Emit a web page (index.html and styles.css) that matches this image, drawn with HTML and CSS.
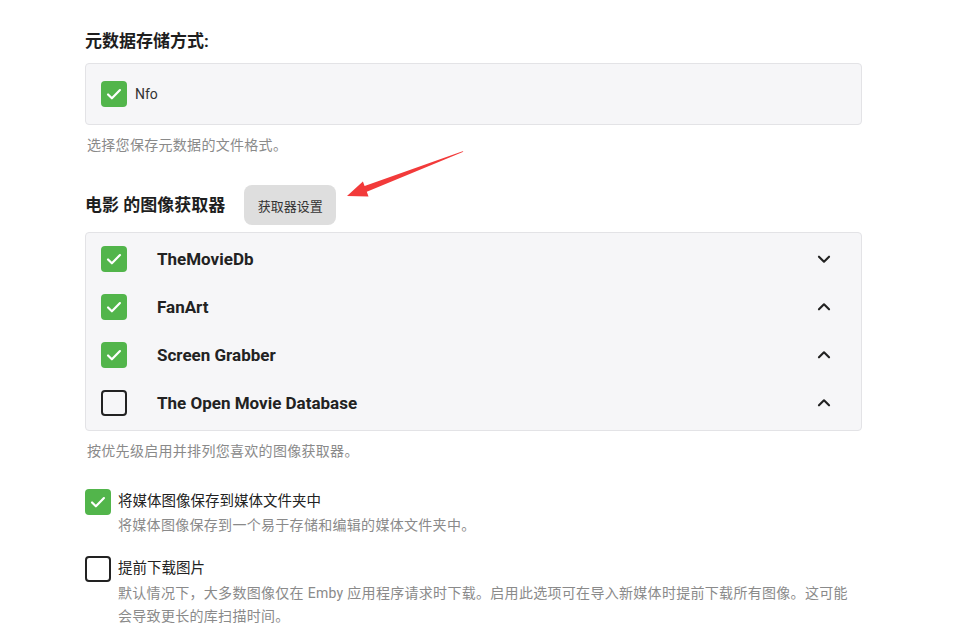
FILE: index.html
```html
<!DOCTYPE html>
<html lang="zh-CN">
  <head>
    <meta charset="UTF-8" />
    <title>图像获取器</title>
    <link rel="stylesheet" href="styles.css">
  </head>
  <body>
    <div class="page">

      <h2 class="section-title">元数据存储方式:</h2>
      <div class="list-box single">
        <div class="check-row">
          <span class="chk on"><svg viewBox="0 0 24 24"><path d="M5.5 12.5l4.2 4.2 8.8-9"/></svg></span>
          <span class="chk-text">Nfo</span>
        </div>
      </div>
      <div class="field-help">选择您保存元数据的文件格式。</div>

      <div class="section-head">
        <h2 class="section-title">电影 的图像获取器</h2>
        <button class="btn-gray">获取器设置</button>
      </div>
      <div class="list-box fetchers">
        <div class="fetcher">
          <span class="chk on"><svg viewBox="0 0 24 24"><path d="M5.5 12.5l4.2 4.2 8.8-9"/></svg></span>
          <span class="fetcher-name">TheMovieDb</span>
          <svg class="chev" viewBox="0 0 24 24"><path d="M6.5 9.5l5.5 5.5 5.5-5.5"/></svg>
        </div>
        <div class="fetcher">
          <span class="chk on"><svg viewBox="0 0 24 24"><path d="M5.5 12.5l4.2 4.2 8.8-9"/></svg></span>
          <span class="fetcher-name">FanArt</span>
          <svg class="chev" viewBox="0 0 24 24"><path d="M6.5 14.5l5.5-5.5 5.5 5.5"/></svg>
        </div>
        <div class="fetcher">
          <span class="chk on"><svg viewBox="0 0 24 24"><path d="M5.5 12.5l4.2 4.2 8.8-9"/></svg></span>
          <span class="fetcher-name">Screen Grabber</span>
          <svg class="chev" viewBox="0 0 24 24"><path d="M6.5 14.5l5.5-5.5 5.5 5.5"/></svg>
        </div>
        <div class="fetcher">
          <span class="chk"></span>
          <span class="fetcher-name">The Open Movie Database</span>
          <svg class="chev" viewBox="0 0 24 24"><path d="M6.5 14.5l5.5-5.5 5.5 5.5"/></svg>
        </div>
      </div>
      <div class="field-help">按优先级启用并排列您喜欢的图像获取器。</div>

      <div class="option first">
        <span class="chk on"><svg viewBox="0 0 24 24"><path d="M5.5 12.5l4.2 4.2 8.8-9"/></svg></span>
        <div class="option-body">
          <div class="option-label">将媒体图像保存到媒体文件夹中</div>
          <div class="option-desc">将媒体图像保存到一个易于存储和编辑的媒体文件夹中。</div>
        </div>
      </div>

      <div class="option">
        <span class="chk"></span>
        <div class="option-body">
          <div class="option-label">提前下载图片</div>
          <div class="option-desc long">默认情况下，大多数图像仅在 Emby 应用程序请求时下载。启用此选项可在导入新媒体时提前下载所有图像。这可能会导致更长的库扫描时间。</div>
        </div>
      </div>

      <!-- 标注箭头 -->
      <svg class="arrow" viewBox="0 0 130 60" width="130" height="60">
        <polygon points="4,50 25.5,50.4 23.8,45.7 120.4,5.8 119.6,5.2 21.6,40.1 19.9,35.4" fill="#f23a3a"/>
      </svg>
    </div>
  </body>
</html>
```

FILE: styles.css
```css
body{
  margin: 0;
  background: #FFFFFF;
  font-family: Roboto, "Noto Sans CJK SC", sans-serif;
  color: #222222;
}

.page{
  position: relative;
  width: 777px;
  margin-left: 85px;
  padding-top: 29px;
}

.section-title{
  margin: 0;
  font-size: 17px;
  line-height: 24px;
  font-weight: 700;
  color: #1e1e1e;
}

.list-box{
  margin-top: 10px;
  border: 1px solid #E3E3E6;
  border-radius: 4px;
  background: #F6F6F8;
}

.list-box.single{
  padding: 17px 15px;
}

.check-row{
  display: flex;
  align-items: center;
}

.chk{
  flex: none;
  width: 26px;
  height: 26px;
  box-sizing: border-box;
  border: 2px solid #222222;
  border-radius: 4px;
  display: flex;
  align-items: center;
  justify-content: center;
}

.chk.on{
  border: none;
  background: #52B54B;
}

.chk svg{
  width: 22px;
  height: 22px;
  fill: none;
  stroke: #FFFFFF;
  stroke-width: 2.4;
  stroke-linecap: round;
  stroke-linejoin: round;
}

.chk-text{
  margin-left: 8px;
  font-size: 14px;
  color: #333333;
}

.field-help{
  margin-top: 10px;
  padding-left: 2px;
  font-size: 14px;
  line-height: 20px;
  color: #8a8a8a;
  letter-spacing: 0.3px;
}

.section-head{
  margin-top: 30px;
  display: flex;
  align-items: center;
}

.btn-gray{
  margin-left: 19px;
  width: 92px;
  height: 40px;
  border: none;
  border-radius: 8px;
  background: #DEDEDE;
  font-family: inherit;
  font-size: 13px;
  color: #333333;
}

.list-box.fetchers{
  margin-top: 7px;
  padding: 2px 0 3px;
}

.fetcher{
  height: 48px;
  display: flex;
  align-items: center;
  padding: 0 26px 0 15px;
}

.fetcher-name{
  flex: 1;
  margin-left: 30px;
  font-size: 17px;
  font-weight: 700;
  color: #222222;
}

.chev{
  width: 22px;
  height: 22px;
  fill: none;
  stroke: #222222;
  stroke-width: 2.3;
  stroke-linecap: round;
  stroke-linejoin: round;
}

.option{
  margin-top: 21px;
  display: flex;
  align-items: flex-start;
}

.option.first{
  margin-top: 28px;
}

.option-body{
  margin-left: 7px;
  width: 735px;
}

.option-label{
  font-size: 14.5px;
  line-height: 26px;
  color: #222222;
}

.option-desc{
  font-size: 14px;
  line-height: 20px;
  color: #8a8a8a;
  letter-spacing: 0.3px;
}

.option-desc.long{
  line-height: 23px;
}

.arrow{
  position: absolute;
  left: 258px;
  top: 146px;
  overflow: visible;
}
```
